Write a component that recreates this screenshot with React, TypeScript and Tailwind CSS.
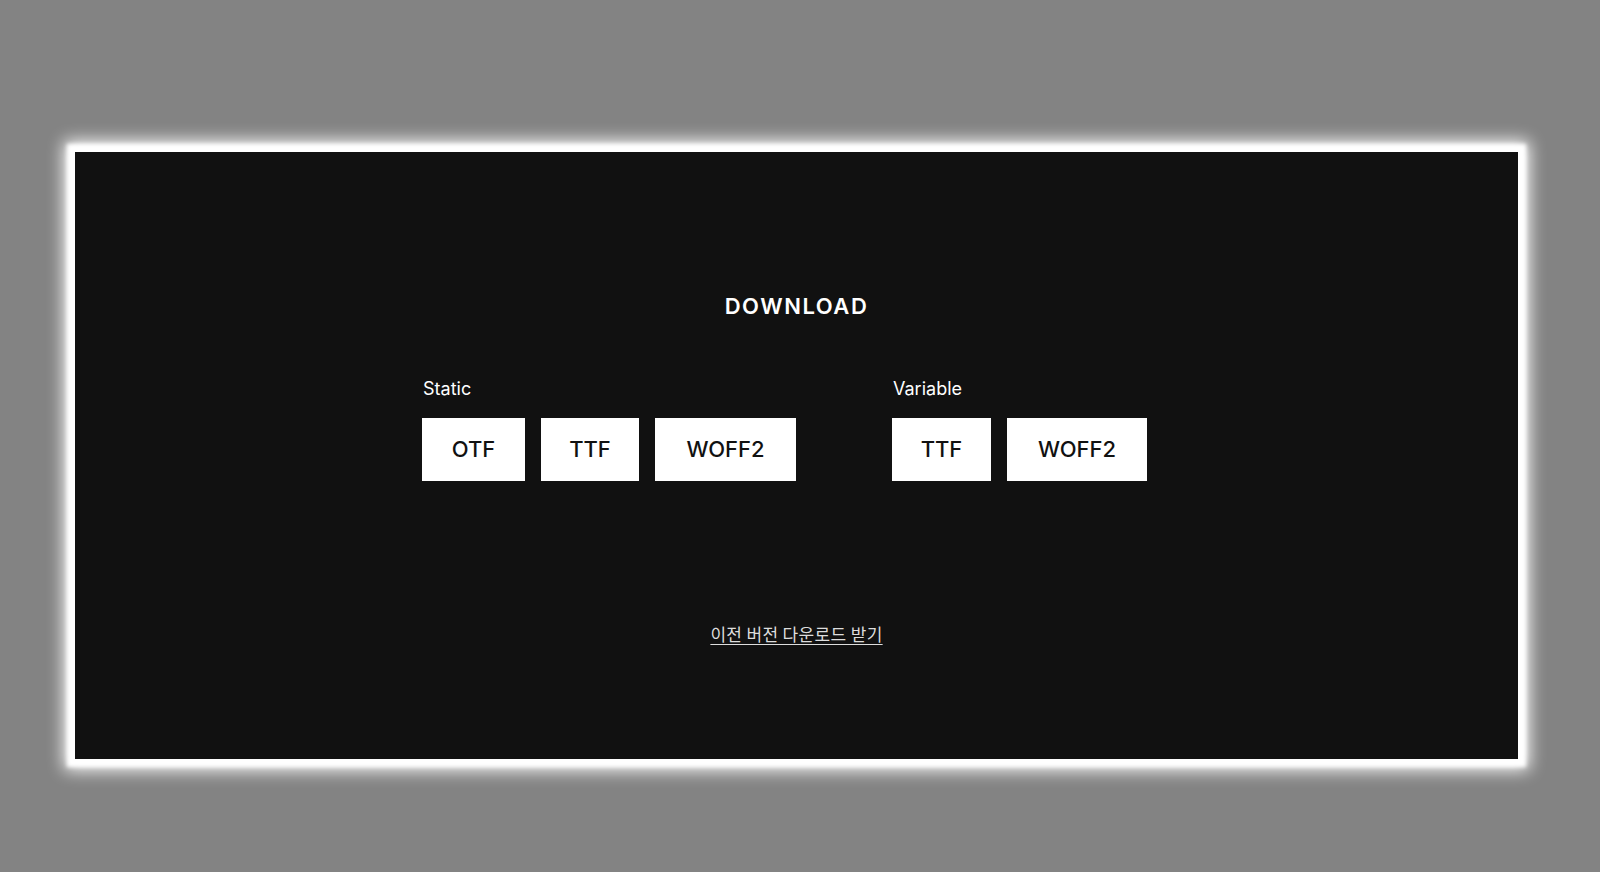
import React from "react";

const latin = { fontFamily: "Inter, 'Noto Sans', sans-serif" };
const korean = { fontFamily: "'Noto Sans CJK KR', 'Noto Sans', sans-serif" };

type Group = {
  label: string;
  buttons: { name: string; width: string }[];
};

const groups: Group[] = [
  {
    label: "Static",
    buttons: [
      { name: "OTF", width: "w-[103px]" },
      { name: "TTF", width: "w-[98px]" },
      { name: "WOFF2", width: "w-[141px]" },
    ],
  },
  {
    label: "Variable",
    buttons: [
      { name: "TTF", width: "w-[99px]" },
      { name: "WOFF2", width: "w-[140px]" },
    ],
  },
];

export default function App() {
  return (
    <div className="h-[872px] w-[1600px] bg-[#838383] pl-[75px] pr-[82px] pt-[152px]" style={latin}>
      <section className="flex h-[607px] flex-col items-center bg-[#111111] pt-[138px] shadow-[0_0_4px_8px_#ffffff,0_0_16px_11px_#ffffff]">
        <h2 className="h-[32px] text-[22px] font-semibold leading-[32px] tracking-[0.07em] text-white">
          DOWNLOAD
        </h2>

        <div className="mt-[55px] flex w-full justify-center gap-[96px] pr-[24px]">
          {groups.map((group) => (
            <div key={group.label} className="flex flex-col">
              <div className="pl-[1px] text-[18px] leading-[24px] text-white">{group.label}</div>
              <div className="mt-[17px] flex gap-[16px]">
                {group.buttons.map((btn) => (
                  <button
                    key={group.label + btn.name}
                    className={`flex h-[63px] ${btn.width} items-center justify-center bg-white text-[22px] font-medium text-[#111111]`}
                  >
                    {btn.name}
                  </button>
                ))}
              </div>
            </div>
          ))}
        </div>

        <a
          href="#"
          className="mt-[141px] text-[17px] leading-[24px] tracking-[0.02em] text-[#dddddd] underline underline-offset-[3px]"
          style={korean}
        >
          이전 버전 다운로드 받기
        </a>
      </section>
    </div>
  );
}
